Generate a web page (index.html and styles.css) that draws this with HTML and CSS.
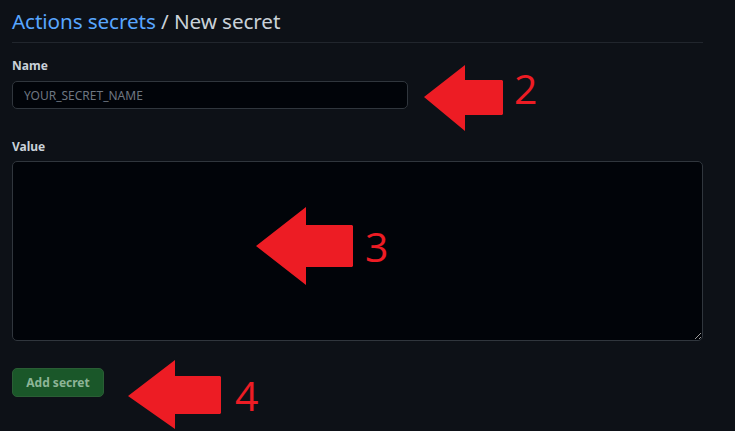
FILE: index.html
```html
<!DOCTYPE html>
<html lang="en">
<head>
<meta charset="utf-8">
<title>New secret</title>
<link rel="stylesheet" href="styles.css">
</head>
<body>
<main class="page">
  <div class="subhead">
    <h2 class="subhead-heading"><a class="crumb" href="#">Actions secrets</a> / New secret</h2>
  </div>
  <form class="secret-form">
    <div class="form-group">
      <label class="form-label" for="name">Name</label>
      <input class="form-input" id="name" type="text" placeholder="YOUR_SECRET_NAME">
    </div>
    <div class="form-group value-group">
      <label class="form-label" for="value">Value</label>
      <textarea class="form-textarea" id="value"></textarea>
    </div>
    <button class="btn-primary" type="button">Add secret</button>
  </form>

  <div class="annot annot-2">
    <svg class="arrow" width="80" height="67" viewBox="0 0 80 67"><polygon points="0,32 41,0 41,15 78,15 79,16 79,49 78,50 41,50 41,66"/></svg>
    <span class="num">2</span>
  </div>
  <div class="annot annot-3">
    <svg class="arrow" width="98" height="79" viewBox="0 0 98 79"><polygon points="0,39 50,0 50,18 96,18 97,19 97,59 96,60 50,60 50,78"/></svg>
    <span class="num">3</span>
  </div>
  <div class="annot annot-4">
    <svg class="arrow" width="94" height="70" viewBox="0 0 94 70"><polygon points="0,36 47,0 47,16 92,16 93,17 93,53 92,54 47,54 47,69"/></svg>
    <span class="num">4</span>
  </div>
</main>
</body>
</html>
```

FILE: styles.css
```css
html, body {
  margin: 0;
  padding: 0;
  background: #0d1117;
}
body {
  font-family: "Noto Sans", "Open Sans", "Liberation Sans", sans-serif;
  color: #c9d1d9;
}
.page {
  position: relative;
  width: 691px;
  height: 431px;
  padding: 0 12px;
  overflow: hidden;
}
.subhead {
  height: 42px;
  border-bottom: 1px solid #21262d;
  display: flex;
  align-items: flex-start;
}
.subhead-heading {
  margin: 0;
  padding-top: 5px;
  font-size: 20.7px;
  font-weight: 400;
  line-height: 32px;
  color: #c9d1d9;
  letter-spacing: -0.1px;
}
.crumb {
  color: #58a6ff;
  text-decoration: none;
}
.secret-form {
  display: flex;
  flex-direction: column;
  align-items: flex-start;
  padding-top: 14px;
}
.form-group {
  display: flex;
  flex-direction: column;
  width: 100%;
}
.value-group {
  margin-top: 29px;
}
.form-label {
  font-size: 12px;
  font-weight: 700;
  line-height: 18px;
  color: #c9d1d9;
  margin-bottom: 6px;
}
.value-group .form-label {
  margin-bottom: 5px;
}
.form-input {
  box-sizing: border-box;
  width: 396px;
  height: 28px;
  margin: 0;
  padding: 0 11px;
  background: #010409;
  border: 1px solid #30363d;
  border-radius: 5px;
  font-family: inherit;
  font-size: 12px;
  color: #c9d1d9;
  outline: none;
}
.form-input::placeholder {
  color: #6e7681;
}
.form-textarea {
  box-sizing: border-box;
  width: 691px;
  height: 180px;
  margin: 0;
  padding: 8px 11px;
  background: #010409;
  border: 1px solid #30363d;
  border-radius: 5px;
  font-family: inherit;
  font-size: 12px;
  color: #c9d1d9;
  resize: vertical;
  outline: none;
  display: block;
}
.btn-primary {
  margin-top: 27px;
  box-sizing: border-box;
  width: 92px;
  height: 29px;
  padding: 0;
  background: #1a5729;
  border: 1px solid #2a5e35;
  border-radius: 5px;
  font-family: inherit;
  font-size: 12px;
  font-weight: 700;
  color: #8db597;
  cursor: default;
}
.annot {
  position: absolute;
  display: flex;
  align-items: flex-start;
}
.arrow {
  display: block;
  fill: #ed1c24;
}
.num {
  position: absolute;
  font-family: "Open Sans", "Noto Sans", sans-serif;
  font-weight: 400;
  font-size: 41px;
  line-height: 1;
  color: #ed1c24;
}
.annot-2 { left: 424px; top: 65px; }
.annot-2 .num { left: 90px; top: 3px; }
.annot-3 { left: 256px; top: 207px; }
.annot-3 .num { left: 109px; top: 19px; }
.annot-4 { left: 128px; top: 360px; }
.annot-4 .num { left: 107px; top: 15px; }
```
